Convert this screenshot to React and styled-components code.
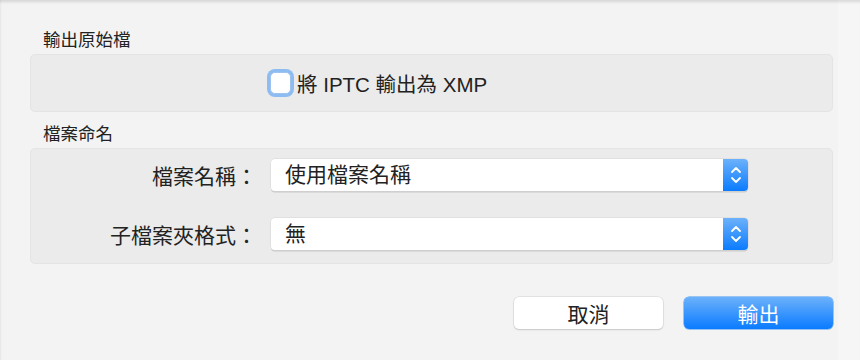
import styled, { createGlobalStyle } from "styled-components";

const GlobalStyle = createGlobalStyle`
    html, body {
        margin: 0;
        padding: 0;
        background: #f3f3f3;
    }
    body {
        font-family: "Liberation Sans", "Noto Sans CJK TC", sans-serif;
        color: #222;
    }
`;

const Sheet = styled.div`
    width: 860px;
    height: 360px;
    box-sizing: border-box;
    padding: 30px 27px 0 30px;
    background: linear-gradient(to right, #f3f3f3 838px, #f6f6f6 838px);
    box-shadow: inset 0 4px 3px -2px rgba(0, 0, 0, 0.12), inset 2px 0 2px -1px rgba(0, 0, 0, 0.05);
    display: flex;
    flex-direction: column;
`;

const Heading = styled.div`
    font-size: 17.5px;
    line-height: 20px;
    height: 20px;
    padding-left: 13px;
    margin-bottom: ${p => p.$gap || 4}px;
`;

const Panel = styled.div`
    background: #ebebeb;
    border: 1px solid #e4e4e4;
    border-radius: 5px;
    box-sizing: border-box;
    height: ${p => p.$height}px;
    display: flex;
    flex-direction: column;
    margin-bottom: ${p => p.$after || 0}px;
`;

const CheckRow = styled.label`
    display: flex;
    align-items: center;
    gap: 6px;
    padding: 13px 0 0 239px;
    font-size: 20.5px;
`;

const Box = styled.span`
    width: 21px;
    height: 22px;
    border-radius: 5px;
    background: #fff;
    border: 1px solid #9fc3ee;
    box-shadow: 0 0 0 3px #8dbcf2;
    box-sizing: border-box;
`;

const Fields = styled.div`
    display: grid;
    grid-template-columns: 226px 477px;
    column-gap: 14px;
    row-gap: 27px;
    padding: 10px 0 0 0;
    align-items: center;
`;

const FieldLabel = styled.div`
    text-align: right;
    font-size: 21px;
`;

const Select = styled.div`
    height: 32px;
    display: flex;
    background: #fff;
    border-radius: 4px;
    box-shadow: 0 0 0 0.5px #d6d6d6, 0 1.5px 0 0 #c9c9c9;
    overflow: hidden;
`;

const SelectValue = styled.div`
    flex: 1;
    padding-left: 14px;
    font-size: 21px;
    line-height: 32px;
`;

const Stepper = styled.div`
    width: 25px;
    background: linear-gradient(#6cb1fb, #0b7cff);
    display: flex;
    align-items: center;
    justify-content: center;
`;

const Buttons = styled.div`
    display: flex;
    justify-content: flex-end;
    gap: 21px;
`;

const Button = styled.button`
    width: 149px;
    height: 32px;
    border-radius: 5px;
    font-family: inherit;
    font-size: 21px;
    padding: 0;
    border: none;
    color: ${p => (p.$primary ? "#fff" : "#222")};
    background: ${p => (p.$primary ? "linear-gradient(#6cb1fb, #0a7bff)" : "#fff")};
    box-shadow: ${p =>
        p.$primary
            ? "0 0 0 0.5px #3f95f5"
            : "0 0 0 0.5px #d2d2d2, 0 1px 1.5px rgba(0,0,0,0.2)"};
`;

const Chevrons = () => (
    <svg width="14" height="22" viewBox="0 0 14 22" fill="none" stroke="#fff" strokeWidth="1.8" strokeLinecap="round" strokeLinejoin="round">
        <path d="M3 8 L7 4 L11 8" />
        <path d="M3 14 L7 18 L11 14" />
    </svg>
);

const Field = ({ label, value }) => (
    <>
        <FieldLabel>{label}</FieldLabel>
        <Select>
            <SelectValue>{value}</SelectValue>
            <Stepper><Chevrons /></Stepper>
        </Select>
    </>
);

export default function App() {
    return (
        <>
            <GlobalStyle />
            <Sheet>
                <Heading>輸出原始檔</Heading>
                <Panel $height={58} $after={12}>
                    <CheckRow>
                        <Box />
                        <span>將 IPTC 輸出為 XMP</span>
                    </CheckRow>
                </Panel>
                <Heading $gap={0}>檔案命名</Heading>
                <Panel $height={116} $after={33}>
                    <Fields>
                        <Field label="檔案名稱：" value="使用檔案名稱" />
                        <Field label="子檔案夾格式：" value="無" />
                    </Fields>
                </Panel>
                <Buttons>
                    <Button>取消</Button>
                    <Button $primary>輸出</Button>
                </Buttons>
            </Sheet>
        </>
    );
}
